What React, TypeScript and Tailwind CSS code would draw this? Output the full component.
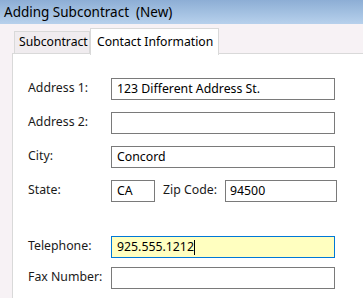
import React from "react";

const font = { fontFamily: '"Noto Sans", "Open Sans", sans-serif' };

function Field({
  label,
  value,
  focused,
}: {
  label: string;
  value?: string;
  focused?: boolean;
}) {
  return (
    <div className="flex items-center h-[22px]">
      <div className="w-[83px] text-[12.3px] text-[#1a1a1a] -mt-[2px]">{label}</div>
      <div
        className={`w-[224px] h-[22px] border pl-[5px] flex items-center text-[12.3px] text-black ${
          focused ? "border-[#0078d7] bg-[#ffffc0]" : "border-[#7a7a7a] bg-white"
        }`}
      >
        {value}
        {focused && <span className="inline-block w-px h-[15px] bg-black" />}
      </div>
    </div>
  );
}

export default function App() {
  return (
    <div className="w-[363px] h-[298px] overflow-hidden bg-[#f7f2f5]" style={font}>
      {/* Title bar */}
      <div className="h-[24px] flex items-center pl-[4px] text-[13.5px] text-black bg-gradient-to-b from-[#8daed5] to-[#b7d1ec] whitespace-pre">
        Adding Subcontract  (New)
      </div>

      {/* Tabs */}
      <div className="pl-[12px]">
        <div className="flex items-end h-[29px]">
          <div className="ml-[2px] w-[76px] h-[22px] border border-b-0 border-[#d9d9d9] bg-[#f0ecef] flex items-center pl-[4px] text-[12.2px] text-black">
            Subcontract
          </div>
          <div className="relative z-10 -mb-[2px] w-[129px] h-[27px] border border-b-0 border-[#d9d9d9] bg-white flex items-center pl-[6px] text-[12.2px] text-black">
            Contact Information
          </div>
        </div>

        {/* Panel */}
        <div className="h-[260px] border-t border-l border-[#d9d9d9] bg-white pt-[24px] pl-[15px]">
          <div className="flex flex-col gap-[12px]">
            <Field label="Address 1:" value="123 Different Address St." />
            <Field label="Address 2:" />
            <Field label="City:" value="Concord" />
            <div className="flex items-center h-[22px]">
              <div className="w-[83px] text-[12.3px] text-[#1a1a1a] -mt-[2px]">State:</div>
              <div className="w-[44px] h-[22px] border border-[#7a7a7a] pl-[5px] flex items-center text-[12.3px]">
                CA
              </div>
              <div className="ml-[8px] w-[62px] text-[12.3px] text-[#1a1a1a] -mt-[2px]">Zip Code:</div>
              <div className="w-[112px] h-[22px] border border-[#7a7a7a] pl-[4px] flex items-center text-[12.3px]">
                94500
              </div>
            </div>
          </div>
          <div className="flex flex-col gap-[9px] mt-[34px]">
            <Field label="Telephone:" value="925.555.1212" focused />
            <Field label="Fax Number:" />
          </div>
        </div>
      </div>
    </div>
  );
}
